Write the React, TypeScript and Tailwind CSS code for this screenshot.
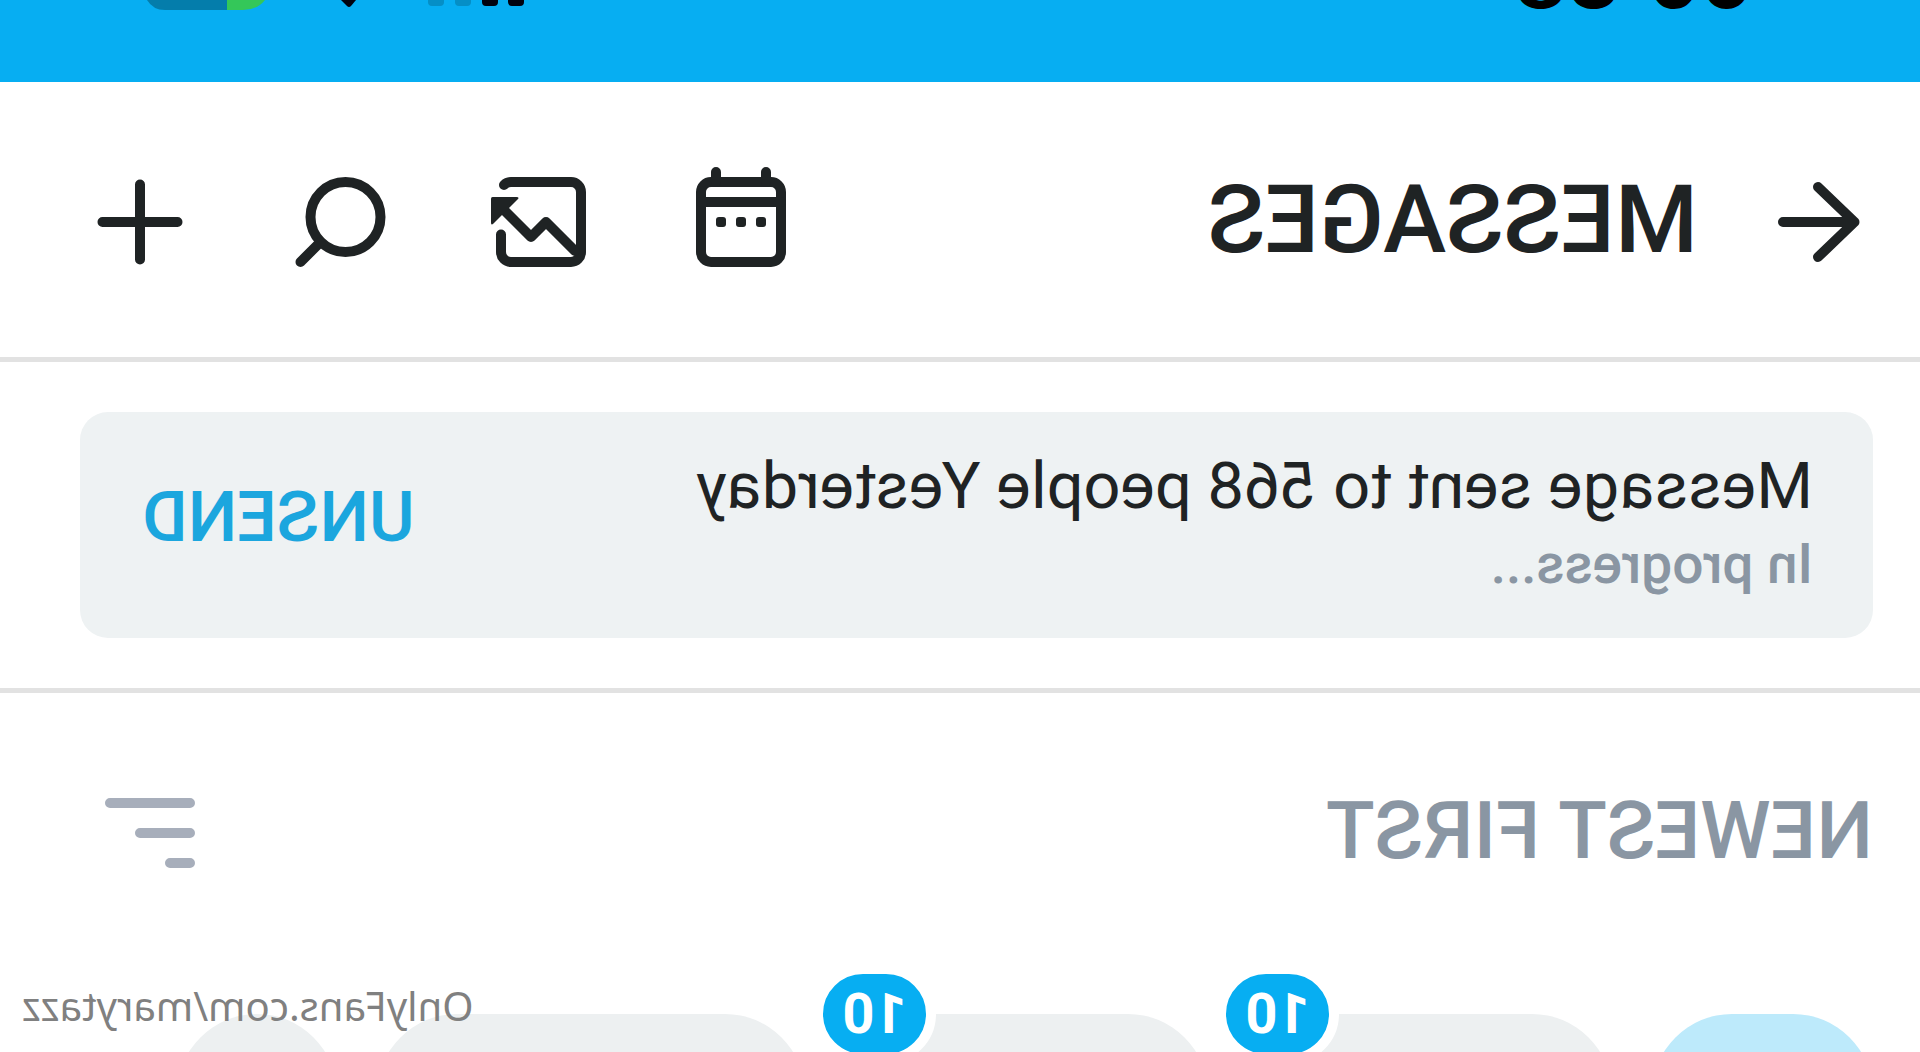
import React from 'react';

const tabs = [
  { name: 'All', width: 'w-[221px]', color: 'bg-[#bdeafb]', count: 0 },
  { name: 'Unread', width: 'w-[364px]', color: 'bg-[#edf0f1]', count: 10 },
  { name: 'Priority', width: 'w-[363px]', color: 'bg-[#edf0f1]', count: 10 },
  { name: 'Favorites', width: 'w-[428px]', color: 'bg-[#edf0f1]', count: 0 },
  { name: 'Edit lists', width: 'w-[160px]', color: 'bg-[#edf0f1]', count: 0 },
];

const Icon: React.FC<{ children: React.ReactNode }> = ({ children }) => (
  <svg
    viewBox="0 0 24 24"
    className="size-[120px]"
    fill="none"
    stroke="currentColor"
    strokeWidth="2"
    strokeLinecap="round"
    strokeLinejoin="round"
    aria-hidden="true"
  >
    {children}
  </svg>
);

const StatusBar: React.FC = () => (
  <div className="flex h-[82px] items-start justify-between bg-[#07aef2] pl-[166px] pr-[145px]">
    <div className="flex h-[10px] items-end gap-[26px] text-[83px] leading-[64px] font-semibold text-black font-['Inter',sans-serif]">
      <span>09</span>
      <span>38</span>
    </div>
    <svg viewBox="0 0 380 10" className="h-[10px] w-[380px]" aria-hidden="true">
      <path d="M1 -10h16v12q0 4-4 4h-8q-4 0-4-4zM27 -10h16v12q0 4-4 4h-8q-4 0-4-4z" fill="#01020f" />
      <path d="M54 -10h16v12q0 4-4 4h-8q-4 0-4-4zM81 -10h16v12q0 4-4 4h-8q-4 0-4-4z" fill="#058fc6" />
      <path d="M169 0h15l-6 6q-2 2-4 0z" fill="#01020f" />
      <path d="M260 -10h38v20h-16q-14 0-22-10z" fill="#34c759" />
      <path d="M298 -10h80v10q-6 10-18 10h-62z" fill="#047dab" />
    </svg>
  </div>
);

const Header: React.FC = () => (
  <header className="flex items-center border-b-[5px] border-[#e2e2e2] pt-[80px] pr-[80px] pb-[75px] pl-[40px] text-[#1f2324]">
    <button aria-label="Back">
      <Icon>
        <path d="M12.4 5 5.1 12l7.3 7M5.1 12h14.3" />
      </Icon>
    </button>
    <h1 className="ml-[62px] flex-1 pb-1 text-[95px] leading-[116px] font-medium">MESSAGES</h1>
    <div className="flex gap-[80px]">
      <button aria-label="Scheduled">
        <Icon>
          <rect x="3.8" y="4" width="16" height="16" rx="2" />
          <path d="M3.8 8h16M6.8 2v2M16.8 2v2" />
          <g fill="currentColor" stroke="none">
            <rect x="6.8" y="11" width="2" height="2" rx="0.6" />
            <rect x="10.8" y="11" width="2" height="2" rx="0.6" />
            <rect x="14.8" y="11" width="2" height="2" rx="0.6" />
          </g>
        </Icon>
      </button>
      <button aria-label="Statistics">
        <Icon>
          <path d="M19.2 4.6Q18.6 4 17.8 4H5.8a2 2 0 0 0-2 2v12a2 2 0 0 0 2 2h12a2 2 0 0 0 2-2v-3.5" />
          <path d="M5 17.8 10.8 12l3 3L19.3 9.5" />
          <path d="M16.7 7h4.8q.3 0 .3.3v4.8q0 .7-.5.2l-4.9-4.9q-.3-.4.3-.4z" fill="currentColor" stroke="none" />
        </Icon>
      </button>
      <button aria-label="Search">
        <Icon>
          <circle cx="10.9" cy="11" r="7" />
          <path d="m15.9 16 4 4" />
        </Icon>
      </button>
      <button aria-label="New message">
        <Icon>
          <path d="M12 4.5v15M4.5 12h15" />
        </Icon>
      </button>
    </div>
  </header>
);

const SentNotice: React.FC = () => (
  <section className="border-b-[5px] border-[#e2e2e2] py-[50px] pr-[80px] pl-[47px]">
    <div className="flex h-[226px] items-start justify-between rounded-[28px] bg-[#eef2f3] pt-[36px] pr-[62px] pl-[60px]">
      <div>
        <p className="text-[65px] leading-[76px] text-[#1f2324]">Message sent to 568 people Yesterday</p>
        <p className="text-[55px] leading-[80px] font-medium text-[#8a96a3]">In progress...</p>
      </div>
      <button className="mt-[24px] text-[70px] leading-[90px] font-medium text-[#1ba6de]">UNSEND</button>
    </div>
  </section>
);

const App: React.FC = () => {
  return (
    // whole screen is shown flipped, as from a front camera
    <div className="relative h-screen -scale-x-100 overflow-hidden bg-white font-['Roboto',sans-serif]">
      <StatusBar />
      <Header />
      <SentNotice />
      <section>
        <div className="flex items-center justify-between pt-[80px] pr-[90px] pl-[47px]">
          <h2 className="pb-1 text-[80px] leading-[116px] font-medium text-[#8a96a3]">NEWEST FIRST</h2>
          <button aria-label="Sort" className="text-[#a7aebb]">
            <Icon>
              <path d="M4 6h16M4 12h10M4 18h4" />
            </Icon>
          </button>
        </div>
        <nav className="mt-[121px] flex gap-[40px] pl-[47px]">
          {tabs.map((tab) => (
            <button
              key={tab.name}
              aria-label={tab.name}
              className={`relative h-[160px] shrink-0 rounded-full ${tab.width} ${tab.color}`}
            >
              {tab.count > 0 && (
                <span className="absolute -top-[50px] -right-[32px] h-[100px] w-[123px] rounded-full border-[10px] border-white bg-[#07aef2] text-center text-[56px] leading-[80px] font-bold text-white">
                  {tab.count}
                </span>
              )}
            </button>
          ))}
        </nav>
      </section>
      <div className="absolute right-[22px] bottom-[22px] font-['Noto_Sans',sans-serif] text-[40px] leading-[48px] text-[#808080]">
        OnlyFans.com/marytazz
      </div>
    </div>
  );
};

export default App;
